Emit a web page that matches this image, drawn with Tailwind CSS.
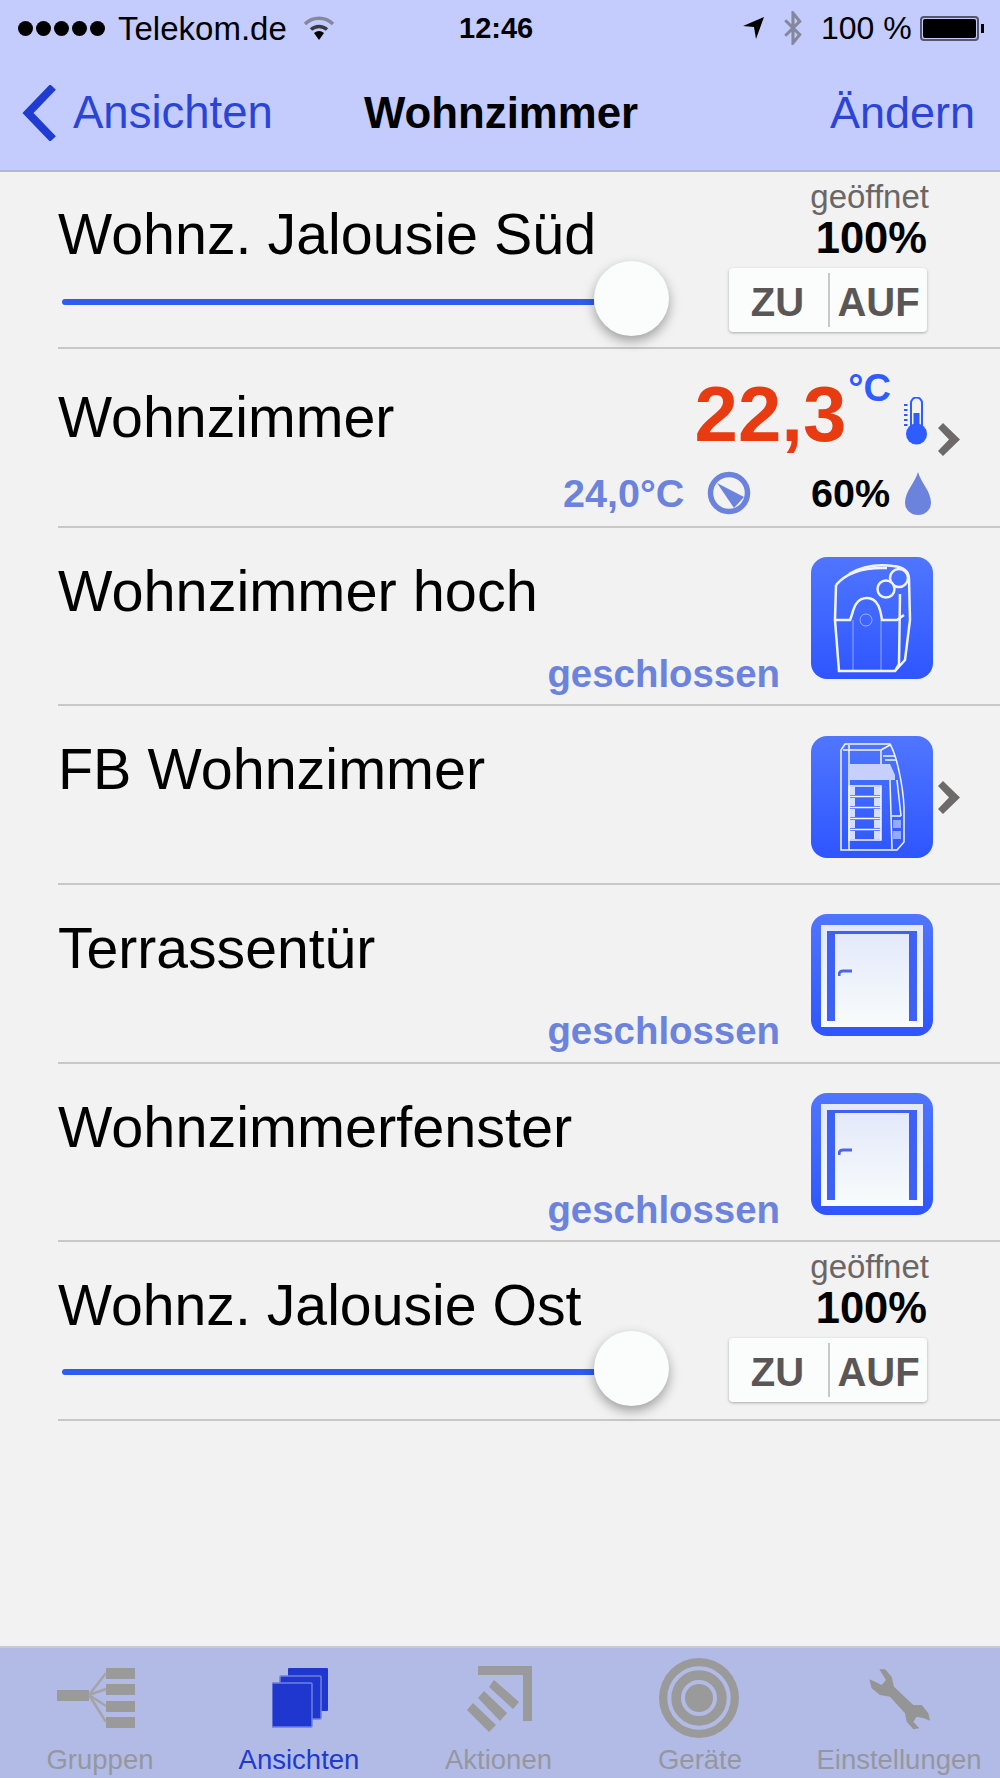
<!DOCTYPE html>
<html lang="de">
<head>
    <meta charset="UTF-8">
    <title>Wohnzimmer</title>
    <script src="https://cdn.jsdelivr.net/npm/@tailwindcss/browser@4"></script>
</head>
<body class="bg-[#f2f2f2] font-['Liberation_Sans',Arial,sans-serif]">
<div class="w-[1000px] h-[1778px] flex flex-col overflow-hidden">

    <!-- Header -->
    <header class="h-[172px] shrink-0 bg-[#c4cbfd] border-b-2 border-[#b4b8d8] flex flex-col">
        <!-- Status bar -->
        <div class="h-[56px] flex items-center pl-[18px] text-[33px] leading-none text-black">
            <div class="flex gap-[3px] w-[88px]">
                <span class="w-[15px] h-[15px] rounded-full bg-black"></span>
                <span class="w-[15px] h-[15px] rounded-full bg-black"></span>
                <span class="w-[15px] h-[15px] rounded-full bg-black"></span>
                <span class="w-[15px] h-[15px] rounded-full bg-black"></span>
                <span class="w-[15px] h-[15px] rounded-full bg-black"></span>
            </div>
            <span class="ml-[12px] w-[185px] whitespace-nowrap">Telekom.de</span>
            <svg class="w-[32px] h-[24px]" viewBox="0 0 32 24">
                <path d="M2 8 A20 20 0 0 1 30 8" fill="none" stroke="#85889c" stroke-width="3.5"/>
                <path d="M8 13.5 A12 12 0 0 1 24 13.5" fill="none" stroke="#3a3a44" stroke-width="3.5"/>
                <path d="M11 17 A8 8 0 0 1 21 17 L16 24 Z" fill="#000"/>
            </svg>
            <span class="ml-[124px] w-[75px] font-bold text-[29px]">12:46</span>
            <svg class="ml-[209px] w-[21px] h-[22px]" viewBox="0 0 21 22"><path d="M21 0 L13 22 L11 10 L0 9 Z" fill="#000"/></svg>
            <svg class="ml-[19px] w-[20px] h-[34px]" viewBox="0 0 19 33"><path d="M2 9 L16 23 L9.5 31 V2 L16 10 L2 24" fill="none" stroke="#85889c" stroke-width="3"/></svg>
            <span class="ml-[18px] w-[92px] whitespace-nowrap text-[32px]">100 %</span>
            <div class="ml-[7px] w-[59px] h-[25px] border-2 border-[#55566a] rounded-[4px] p-[1px]"><div class="w-full h-full bg-black rounded-[2px]"></div></div>
            <div class="ml-[2px] w-[3px] h-[9px] bg-black"></div>
        </div>
        <!-- Nav bar -->
        <div class="flex-1 relative flex items-center justify-between pl-[22px] pr-[25px] pt-[2px] pb-[3px]">
            <div class="flex items-center">
                <svg class="w-[34px] h-[56px]" viewBox="0 0 34 56"><path d="M31 2 L6 28 L31 54" fill="none" stroke="#1f3bd0" stroke-width="8"/></svg>
                <span class="ml-[17px] text-[45.5px] leading-none text-[#2a44d6]">Ansichten</span>
            </div>
            <span class="absolute left-[364px] top-[35px] text-[43.8px] leading-none font-bold text-black">Wohnzimmer</span>
            <span class="text-[45px] leading-none text-[#2a44d6]">Ändern</span>
        </div>
    </header>

    <!-- List -->
    <main class="flex-1 pl-[58px]">

        <!-- Jalousie Süd -->
        <section class="h-[177px] border-b-2 border-[#c9c7c7] flex">
            <div class="w-[671px] flex flex-col">
                <h2 class="mt-[32px] text-[57.4px] leading-[60px] text-black whitespace-nowrap">Wohnz. Jalousie Süd</h2>
                <div class="mt-[-3px] flex items-center">
                    <div class="ml-[4px] mt-[6px] w-[532px] h-[6px] rounded-l-full bg-[#2e5cf0]"></div>
                    <div class="w-[75px] h-[75px] rounded-full bg-[#fbfdfc] shadow-[0_5px_12px_rgba(0,0,0,0.35)]"></div>
                </div>
            </div>
            <div class="w-[198px] flex flex-col items-end">
                <span class="mt-[8px] mr-[-2px] text-[33px] leading-[34px] text-[#6b6666]">geöffnet</span>
                <span class="mt-[4px] text-[43.5px] leading-[40px] font-bold text-black">100%</span>
                <div class="mt-[10px] w-[198px] h-[64px] flex items-center bg-[#fbfdfc] rounded-[4px] shadow-[0_1px_3px_rgba(0,0,0,0.3)] text-[40px] leading-none font-bold text-[#5b5656]">
                    <span class="w-[97px] pt-[4px] text-center">ZU</span>
                    <span class="ml-[2px] w-[2px] h-[54px] bg-[#c9c7c7]"></span>
                    <span class="flex-1 pt-[4px] text-center">AUF</span>
                </div>
            </div>
        </section>

        <!-- Wohnzimmer Klima -->
        <section class="h-[179px] border-b-2 border-[#c9c7c7] flex flex-col">
            <div class="flex items-start mr-[40px]">
                <h2 class="mt-[38px] flex-1 text-[57.3px] leading-[60px] text-black">Wohnzimmer</h2>
                <span class="mt-[21px] text-[78px] leading-[88px] font-bold text-[#e83b12]">22,3</span>
                <span class="mt-[19px] ml-[2px] text-[38px] leading-[40px] font-bold text-[#2e5cff]">°C</span>
                <svg class="mt-[48px] ml-[13px] w-[24px] h-[48px] shrink-0" viewBox="0 0 24 48">
                    <path d="M7 31 V6 A5.5 5.5 0 0 1 18 6 V31" fill="none" stroke="#2e5cff" stroke-width="2"/>
                    <rect x="9.5" y="16" width="6" height="18" fill="#2e5cff"/>
                    <circle cx="12.5" cy="37" r="10.5" fill="#2e5cff"/>
                    <path d="M0 8 H3.5 M0 13 H3.5 M0 18 H3.5 M0 23 H3.5 M0 28 H3.5" stroke="#2e5cff" stroke-width="2"/>
                </svg>
                <svg class="mt-[74px] ml-[10px] w-[22px] h-[33px] shrink-0" viewBox="0 0 22 33"><path d="M0 5 L5 0 L22 16.5 L5 33 L0 28 L11 16.5 Z" fill="#6e6a6a"/></svg>
            </div>
            <div class="mt-[13px] flex items-center pl-[505px] text-[39.5px] leading-[44px] font-bold">
                <span class="w-[120px] whitespace-nowrap text-[#6c83dd]">24,0°C</span>
                <svg class="ml-[24px] w-[44px] h-[44px] shrink-0" viewBox="0 0 44 44">
                    <circle cx="22" cy="22" r="18.5" fill="none" stroke="#6c83dd" stroke-width="5.5"/>
                    <path d="M10 12 L37 26 L27 37 Z" fill="#6c83dd"/>
                </svg>
                <span class="ml-[60px] w-[78px] text-black">60%</span>
                <svg class="ml-[16px] w-[26px] h-[43px] shrink-0" viewBox="0 0 26 43"><path d="M13 0 C16 11 26 19 26 31 A13 12 0 0 1 0 31 C0 19 10 11 13 0 Z" fill="#6c83dd"/></svg>
            </div>
        </section>

        <!-- Wohnzimmer hoch -->
        <section class="h-[178px] border-b-2 border-[#c9c7c7] flex">
            <div class="flex-1 flex flex-col">
                <h2 class="mt-[33px] text-[57.7px] leading-[60px] text-black">Wohnzimmer hoch</h2>
                <span class="mt-[31px] mr-[31px] self-end text-[38.4px] leading-[44px] font-bold text-[#6c83dd]">geschlossen</span>
            </div>
            <div class="mt-[29px] mr-[67px] w-[122px] h-[122px] rounded-[16px] bg-gradient-to-b from-[#5075ff] to-[#2e55ff]">
                <svg class="w-[122px] h-[122px]" viewBox="0 0 122 122" fill="none" stroke="#f2f5ff" stroke-width="2.5">
                    <path d="M25 28 C35 16 50 10 76 11"/>
                    <path d="M38 17 C50 10 66 7 82 9 C92 10 98 14 98 22 L99 63 L94 103 L84 114"/>
                    <path d="M25 28 L24 63 L28 114 L84 114 L88 107 L89 37"/>
                    <path d="M24 63 H39 C42 58 42 41 56 41 C69 41 70 58 71 63 H86 L93 58"/>
                    <circle cx="88" cy="21" r="9"/>
                    <circle cx="75" cy="32" r="8.5" fill="#466bff"/>
                    <path d="M42 63 V113 M70 63 V113" stroke-width="1" opacity="0.5"/>
                    <circle cx="55" cy="63" r="6" stroke-width="1" opacity="0.5"/>
                </svg>
            </div>
        </section>

        <!-- FB Wohnzimmer -->
        <section class="h-[179px] border-b-2 border-[#c9c7c7] flex">
            <div class="flex-1">
                <h2 class="mt-[33px] text-[57.5px] leading-[60px] text-black">FB Wohnzimmer</h2>
            </div>
            <div class="mt-[30px] w-[122px] h-[122px] rounded-[16px] bg-gradient-to-b from-[#5075ff] to-[#2e55ff]">
                <svg class="w-[122px] h-[122px]" viewBox="0 0 122 122" fill="none" stroke="#f2f5ff" stroke-width="1.5">
                    <path d="M30 14 L34 8 H79 C86 20 92 50 93 71 V106 L86 114 H30 Z"/>
                    <path d="M38 9 V114 M32 14 H70 V28 M70 14 L79 9 M72 20 H84 M74 24 H85"/>
                    <path d="M38 28 H79 L84 39 V44 H38 Z" fill="#c6d0fb" stroke="none"/>
                    <g fill="#f2f5ff" fill-opacity="0.85" stroke="none">
                        <rect x="38" y="51" width="6" height="8"/><rect x="63" y="51" width="7" height="8"/>
                        <rect x="38" y="62" width="6" height="8"/><rect x="63" y="62" width="7" height="8"/>
                        <rect x="38" y="73" width="6" height="8"/><rect x="63" y="73" width="7" height="8"/>
                        <rect x="38" y="84" width="6" height="8"/><rect x="63" y="84" width="7" height="8"/>
                        <rect x="38" y="95" width="6" height="8"/><rect x="63" y="95" width="7" height="8"/>
                        <rect x="82" y="84" width="8" height="8" opacity="0.6"/><rect x="82" y="95" width="8" height="8" opacity="0.6"/>
                    </g>
                    <path d="M38 50 H70 V104 H38 Z M38 60.5 H70 M38 71.5 H70 M38 82.5 H70 M38 93.5 H70"/>
                    <path d="M79 44 L81 113 M86 44 L90 80 M81 80 H90"/>
                </svg>
            </div>
            <svg class="mt-[75px] ml-[5px] mr-[40px] w-[22px] h-[33px] shrink-0" viewBox="0 0 22 33"><path d="M0 5 L5 0 L22 16.5 L5 33 L0 28 L11 16.5 Z" fill="#6e6a6a"/></svg>
        </section>

        <!-- Terrassentür -->
        <section class="h-[179px] border-b-2 border-[#c9c7c7] flex">
            <div class="flex-1 flex flex-col">
                <h2 class="mt-[33px] text-[57.1px] leading-[60px] text-black">Terrassentür</h2>
                <span class="mt-[31px] mr-[31px] self-end text-[38.4px] leading-[44px] font-bold text-[#6c83dd]">geschlossen</span>
            </div>
            <div class="mt-[29px] mr-[67px] w-[122px] h-[122px] rounded-[16px] bg-gradient-to-b from-[#5075ff] to-[#2e55ff] pt-[11px] px-[10px] pb-[9px]">
                <div class="h-full bg-gradient-to-b from-[#e2e7fa] to-[#f8fcfb] pt-[6px] px-[6px]">
                    <div class="h-[90px] border-x-[8px] border-t-[3px] border-[#3f60f5] pt-[35px] pl-[3px]">
                        <svg class="w-[14px] h-[8px]" viewBox="0 0 14 8"><path d="M1 7 C1 3 2 2 5 2 H14" fill="none" stroke="#4b66e8" stroke-width="3"/></svg>
                    </div>
                </div>
            </div>
        </section>

        <!-- Wohnzimmerfenster -->
        <section class="h-[178px] border-b-2 border-[#c9c7c7] flex">
            <div class="flex-1 flex flex-col">
                <h2 class="mt-[33px] text-[57.6px] leading-[60px] text-black">Wohnzimmerfenster</h2>
                <span class="mt-[31px] mr-[31px] self-end text-[38.4px] leading-[44px] font-bold text-[#6c83dd]">geschlossen</span>
            </div>
            <div class="mt-[29px] mr-[67px] w-[122px] h-[122px] rounded-[16px] bg-gradient-to-b from-[#5075ff] to-[#2e55ff] pt-[11px] px-[10px] pb-[9px]">
                <div class="h-full bg-gradient-to-b from-[#e2e7fa] to-[#f8fcfb] pt-[6px] px-[6px]">
                    <div class="h-[90px] border-x-[8px] border-t-[3px] border-[#3f60f5] pt-[35px] pl-[3px]">
                        <svg class="w-[14px] h-[8px]" viewBox="0 0 14 8"><path d="M1 7 C1 3 2 2 5 2 H14" fill="none" stroke="#4b66e8" stroke-width="3"/></svg>
                    </div>
                </div>
            </div>
        </section>

        <!-- Jalousie Ost -->
        <section class="h-[179px] border-b-2 border-[#c9c7c7] flex">
            <div class="w-[671px] flex flex-col">
                <h2 class="mt-[33px] text-[57.2px] leading-[60px] text-black whitespace-nowrap">Wohnz. Jalousie Ost</h2>
                <div class="mt-[-4px] flex items-center">
                    <div class="ml-[4px] mt-[6px] w-[532px] h-[6px] rounded-l-full bg-[#2e5cf0]"></div>
                    <div class="w-[75px] h-[75px] rounded-full bg-[#fbfdfc] shadow-[0_5px_12px_rgba(0,0,0,0.35)]"></div>
                </div>
            </div>
            <div class="w-[198px] flex flex-col items-end">
                <span class="mt-[8px] mr-[-2px] text-[33px] leading-[34px] text-[#6b6666]">geöffnet</span>
                <span class="mt-[4px] text-[43.5px] leading-[40px] font-bold text-black">100%</span>
                <div class="mt-[10px] w-[198px] h-[64px] flex items-center bg-[#fbfdfc] rounded-[4px] shadow-[0_1px_3px_rgba(0,0,0,0.3)] text-[40px] leading-none font-bold text-[#5b5656]">
                    <span class="w-[97px] pt-[4px] text-center">ZU</span>
                    <span class="ml-[2px] w-[2px] h-[54px] bg-[#c9c7c7]"></span>
                    <span class="flex-1 pt-[4px] text-center">AUF</span>
                </div>
            </div>
        </section>
    </main>

    <!-- Tab bar -->
    <nav class="h-[132px] shrink-0 bg-[#b2bbe6] border-t-2 border-[#c9c9d6] grid grid-cols-5 text-[27.5px] leading-[32px] text-[#95979f]">
        <div class="flex flex-col items-center justify-between pb-[2px]">
            <svg class="mt-[15px] mr-[6px] h-[70px] w-[80px]" viewBox="0 0 80 70" fill="#9a9a9a">
                <rect x="0" y="27" width="32" height="11"/>
                <rect x="49" y="5" width="29" height="11"/><rect x="49" y="21" width="29" height="11"/><rect x="49" y="38" width="29" height="11"/><rect x="49" y="54" width="29" height="11"/>
                <path d="M32 32 L49 10 M32 32 L49 26 M32 32 L49 43 M32 32 L49 59" stroke="#a4a4a8" stroke-width="2.5"/>
            </svg>
            <span>Gruppen</span>
        </div>
        <div class="flex flex-col items-center justify-between pb-[2px] text-[#2039cf]">
            <svg class="mt-[20px] h-[60px] w-[56px]" viewBox="0 0 56 60">
                <rect x="16" y="0" width="40" height="43" rx="1" fill="#1f37cf"/>
                <rect x="8" y="8" width="41" height="43" rx="1" fill="#1f37cf" stroke="#6f80db" stroke-width="1.5"/>
                <rect x="0" y="15" width="40" height="44" rx="1" fill="#1f37cf" stroke="#6f80db" stroke-width="1.5"/>
            </svg>
            <span class="mr-[2px]">Ansichten</span>
        </div>
        <div class="flex flex-col items-center justify-between pb-[2px]">
            <svg class="mt-[17px] h-[68px] w-[68px]" viewBox="0 0 68 68" fill="#9a9a9a">
                <path d="M12 1 H66 V56 H57 V10 H12 Z"/>
                <path d="M28 15 L53 37 L47 44 L23 22 Z"/>
                <path d="M18 26 L41 48 L34 56 L12 33 Z"/>
                <path d="M7 38 L30 60 L23 67 L1 45 Z"/>
            </svg>
            <span class="mr-[3px]">Aktionen</span>
        </div>
        <div class="flex flex-col items-center justify-between pb-[2px]">
            <svg class="mt-[10px] mr-[3px] h-[80px] w-[80px]" viewBox="0 0 80 80" fill="none">
                <circle cx="40" cy="40" r="40" fill="#9a9a9a"/>
                <circle cx="40" cy="40" r="29.7" stroke="#b2bbe6" stroke-width="4"/>
                <circle cx="40" cy="40" r="16" stroke="#b2bbe6" stroke-width="4"/>
            </svg>
            <span>Geräte</span>
        </div>
        <div class="flex flex-col items-center justify-between pb-[2px]">
            <svg class="mt-[2px] h-[85px] w-[100px]" viewBox="0 0 300 255" fill="#959595">
                <path d="M88 58 L105 58 L125 80 L132 110 L190 165 L215 165 L235 190 L240 212 L222 205 L200 200 L190 215 L208 235 L190 238 L170 215 L165 190 L120 140 L90 135 L65 115 L58 88 L75 95 L95 105 L108 90 Z"/>
            </svg>
            <span class="mr-[2px]">Einstellungen</span>
        </div>
    </nav>
</div>
</body>
</html>
